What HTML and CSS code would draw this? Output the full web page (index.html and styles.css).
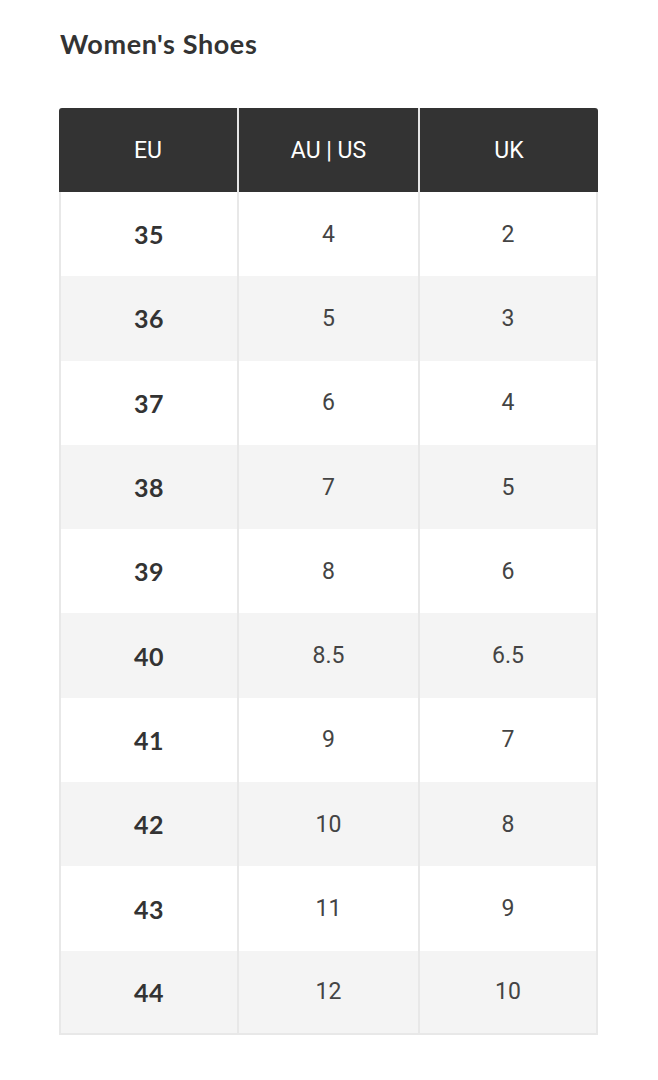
FILE: index.html
```html
<!DOCTYPE html>
<html lang="en">
<head>
<meta charset="utf-8">
<title>Women's Shoes</title>
<link rel="stylesheet" href="styles.css">
</head>
<body>
<main class="page">
  <h1 class="title">Women's Shoes</h1>
  <table class="sizes">
    <thead>
      <tr><th class="c1">EU</th><th class="c2">AU | US</th><th class="c3">UK</th></tr>
    </thead>
    <tbody>
      <tr><td class="eu">35</td><td>4</td><td>2</td></tr>
      <tr><td class="eu">36</td><td>5</td><td>3</td></tr>
      <tr><td class="eu">37</td><td>6</td><td>4</td></tr>
      <tr><td class="eu">38</td><td>7</td><td>5</td></tr>
      <tr><td class="eu">39</td><td>8</td><td>6</td></tr>
      <tr><td class="eu">40</td><td>8.5</td><td>6.5</td></tr>
      <tr><td class="eu">41</td><td>9</td><td>7</td></tr>
      <tr><td class="eu">42</td><td>10</td><td>8</td></tr>
      <tr><td class="eu">43</td><td>11</td><td>9</td></tr>
      <tr><td class="eu">44</td><td>12</td><td>10</td></tr>
    </tbody>
  </table>
</main>
</body>
</html>
```
FILE: styles.css
```css
html, body {
  margin: 0;
  padding: 0;
  background: #ffffff;
}
.page {
  padding: 28px 60px 0 59px;
}
.title {
  margin: 0 0 48px 1px;
  font-family: "Lato", "Inter", sans-serif;
  font-weight: 700;
  font-size: 27px;
  line-height: 32px;
  color: #333333;
  letter-spacing: 0.6px;
}
.sizes {
  width: 539px;
  border-collapse: separate;
  border-spacing: 0;
  table-layout: fixed;
}
.sizes th,
.sizes td {
  box-sizing: border-box;
}
.sizes th.c1 { width: 178px; }
.sizes th.c2 { width: 181px; }
.sizes th {
  background: #333333;
  color: #ffffff;
  font-family: "Roboto", sans-serif;
  font-weight: 400;
  font-size: 23px;
  height: 84px;
  padding: 0;
  text-align: center;
  border-left: 2px solid #e6e6e6;
}
.sizes th:first-child {
  border-left: none;
  border-top-left-radius: 3px;
}
.sizes th:last-child {
  border-top-right-radius: 3px;
}
.sizes td {
  height: 84.3px;
  padding: 0;
  text-align: center;
  font-family: "Roboto", sans-serif;
  font-size: 23px;
  color: #444444;
  border-left: 2px solid #e8e8e8;
}
.sizes td:last-child {
  border-right: 2px solid #e8e8e8;
}
.sizes tbody tr:nth-child(even) td {
  background: #f4f4f4;
}
.sizes tbody tr:last-child td {
  border-bottom: 2px solid #e8e8e8;
}
.sizes td.eu {
  font-family: "Lato", "Inter", sans-serif;
  font-weight: 700;
  font-size: 25px;
  letter-spacing: 0.6px;
  color: #333333;
}
```
